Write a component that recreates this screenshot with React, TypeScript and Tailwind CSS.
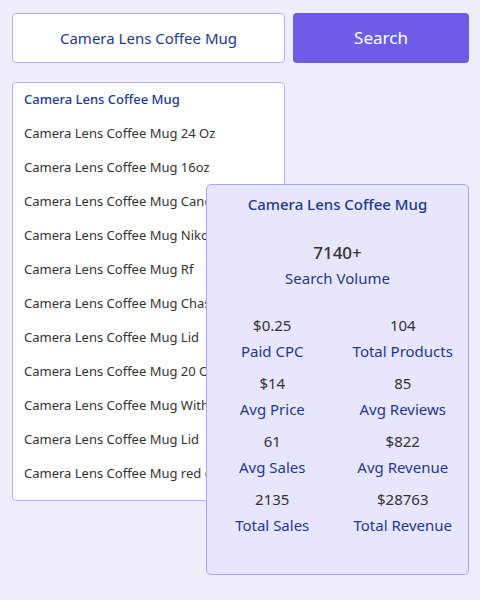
import { useState } from "react";

const suggestions = [
  "Camera Lens Coffee Mug",
  "Camera Lens Coffee Mug 24 Oz",
  "Camera Lens Coffee Mug 16oz",
  "Camera Lens Coffee Mug Canon",
  "Camera Lens Coffee Mug Nikon",
  "Camera Lens Coffee Mug Rf",
  "Camera Lens Coffee Mug Chasing Light",
  "Camera Lens Coffee Mug Lid",
  "Camera Lens Coffee Mug 20 Oz",
  "Camera Lens Coffee Mug With Lid",
  "Camera Lens Coffee Mug Lid",
  "Camera Lens Coffee Mug red dot",
];

const stats = [
  { value: "$0.25", label: "Paid CPC" },
  { value: "104", label: "Total Products" },
  { value: "$14", label: "Avg Price" },
  { value: "85", label: "Avg Reviews" },
  { value: "61", label: "Avg Sales" },
  { value: "$822", label: "Avg Revenue" },
  { value: "2135", label: "Total Sales" },
  { value: "$28763", label: "Total Revenue" },
];

export default function App() {
  const [query, setQuery] = useState("Camera Lens Coffee Mug");

  return (
    <div
      className="relative min-h-[600px] w-[480px] bg-[#eeedfb] pl-3 pr-[11px] pt-[13px]"
      style={{ fontFamily: '"Noto Sans", "Open Sans", sans-serif' }}
    >
      <div className="flex gap-2">
        <input
          className="h-[50px] w-[273px] rounded-[4px] border border-[#b4aef2] bg-white text-center text-[15px] text-[#1e3a8a] outline-none"
          value={query}
          onChange={(e) => setQuery(e.target.value)}
        />
        <button className="h-[50px] w-[176px] rounded-[4px] bg-[#6c5ce7] text-[17px] text-white">
          Search
        </button>
      </div>

      <ul className="mt-[19px] h-[419px] w-[273px] overflow-hidden rounded-[4px] border border-[#b4aef2] bg-white pl-[11px]">
        {suggestions.map((item, i) => (
          <li
            key={i}
            className={
              i === 0
                ? "flex h-[34px] items-center whitespace-nowrap text-[13px] font-medium text-[#1e3a8a]"
                : "flex h-[34px] items-center whitespace-nowrap text-[13px] text-[#333333]"
            }
          >
            {item}
          </li>
        ))}
      </ul>

      <div className="absolute left-[206px] top-[184px] flex h-[391px] w-[263px] flex-col items-center rounded-[5px] border border-[#a9a3f1] bg-[#e8e6fd] pt-[8px]">
        <h2 className="text-[15px] font-medium leading-[22px] text-[#1e3a8a]">{query}</h2>
        <p className="mt-[26px] text-[17px] font-medium leading-[24px] text-[#333333]">7140+</p>
        <p className="mt-[2px] text-[15px] leading-[22px] text-[#1e3a8a]">Search Volume</p>
        <div className="mt-[25px] grid w-full grid-cols-2 gap-y-[10px]">
          {stats.map((s) => (
            <div key={s.label} className="flex flex-col items-center">
              <span className="text-[15px] leading-[22px] text-[#333333]">{s.value}</span>
              <span className="mt-[4px] text-[15px] leading-[22px] text-[#1e3a8a]">{s.label}</span>
            </div>
          ))}
        </div>
      </div>
    </div>
  );
}
